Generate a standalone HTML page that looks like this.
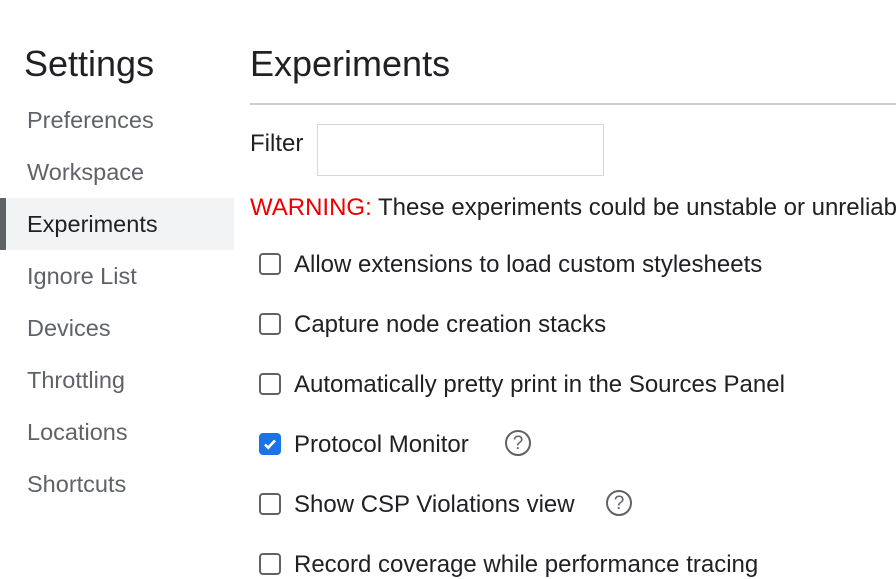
<!DOCTYPE html>
<html><head><style>
body{margin:0;width:896px;height:558px;overflow:hidden;background:#fff;font-family:"Liberation Sans",sans-serif;color:#202124;position:relative}
.a{position:absolute;white-space:nowrap}
.nav{font-size:23.5px;color:#5f6368;left:27px}
.cb{position:absolute;left:259px;width:18px;height:18px;border:2px solid #5f6368;border-radius:4px;background:#fff}
.lab{font-size:24px;left:294px}
.q{position:absolute;width:22px;height:22px;border:2px solid #5f6368;border-radius:50%;font-size:19px;color:#5f6368;text-align:center;line-height:23px}
</style></head><body>
<div class="a" style="left:24px;top:43px;font-size:36px">Settings</div>
<div class="a nav" style="top:107px">Preferences</div>
<div class="a nav" style="top:159px">Workspace</div>
<div style="position:absolute;left:0;top:198px;width:234px;height:52px;background:#f1f3f4"></div>
<div style="position:absolute;left:0;top:198px;width:6px;height:52px;background:#5f6368"></div>
<div class="a nav" style="top:211px;color:#202124">Experiments</div>
<div class="a nav" style="top:263px">Ignore List</div>
<div class="a nav" style="top:315px">Devices</div>
<div class="a nav" style="top:367px">Throttling</div>
<div class="a nav" style="top:419px">Locations</div>
<div class="a nav" style="top:471px">Shortcuts</div>
<div class="a" style="left:250px;top:43px;font-size:36px">Experiments</div>
<div style="position:absolute;left:250px;top:103px;width:646px;height:2px;background:#cbcdd1"></div>
<div class="a" style="left:250px;top:130px;font-size:24px">Filter</div>
<div style="position:absolute;left:317px;top:124px;width:285px;height:50px;border:1px solid #d5d7da"></div>
<div class="a" style="left:250px;top:194px;font-size:24px"><span style="color:#e00">WARNING:</span> These experiments could be unstable or unreliable</div>
<div class="cb" style="top:253px"></div><div class="a lab" style="top:251px">Allow extensions to load custom stylesheets</div>
<div class="cb" style="top:313px"></div><div class="a lab" style="top:311px">Capture node creation stacks</div>
<div class="cb" style="top:373px"></div><div class="a lab" style="top:371px">Automatically pretty print in the Sources Panel</div>
<div class="cb" style="top:433px;background:#1a73e8;border-color:#1a73e8"><svg width="18" height="18" viewBox="0 0 18 18" style="display:block"><path d="M4 9.5l3.2 3.2L14 5.5" stroke="#fff" stroke-width="2.6" fill="none"/></svg></div><div class="a lab" style="top:431px">Protocol Monitor</div>
<div class="q" style="left:505px;top:430px">?</div>
<div class="cb" style="top:493px"></div><div class="a lab" style="top:491px">Show CSP Violations view</div>
<div class="q" style="left:606px;top:490px">?</div>
<div class="cb" style="top:553px"></div><div class="a lab" style="top:551px">Record coverage while performance tracing</div>
</body></html>
